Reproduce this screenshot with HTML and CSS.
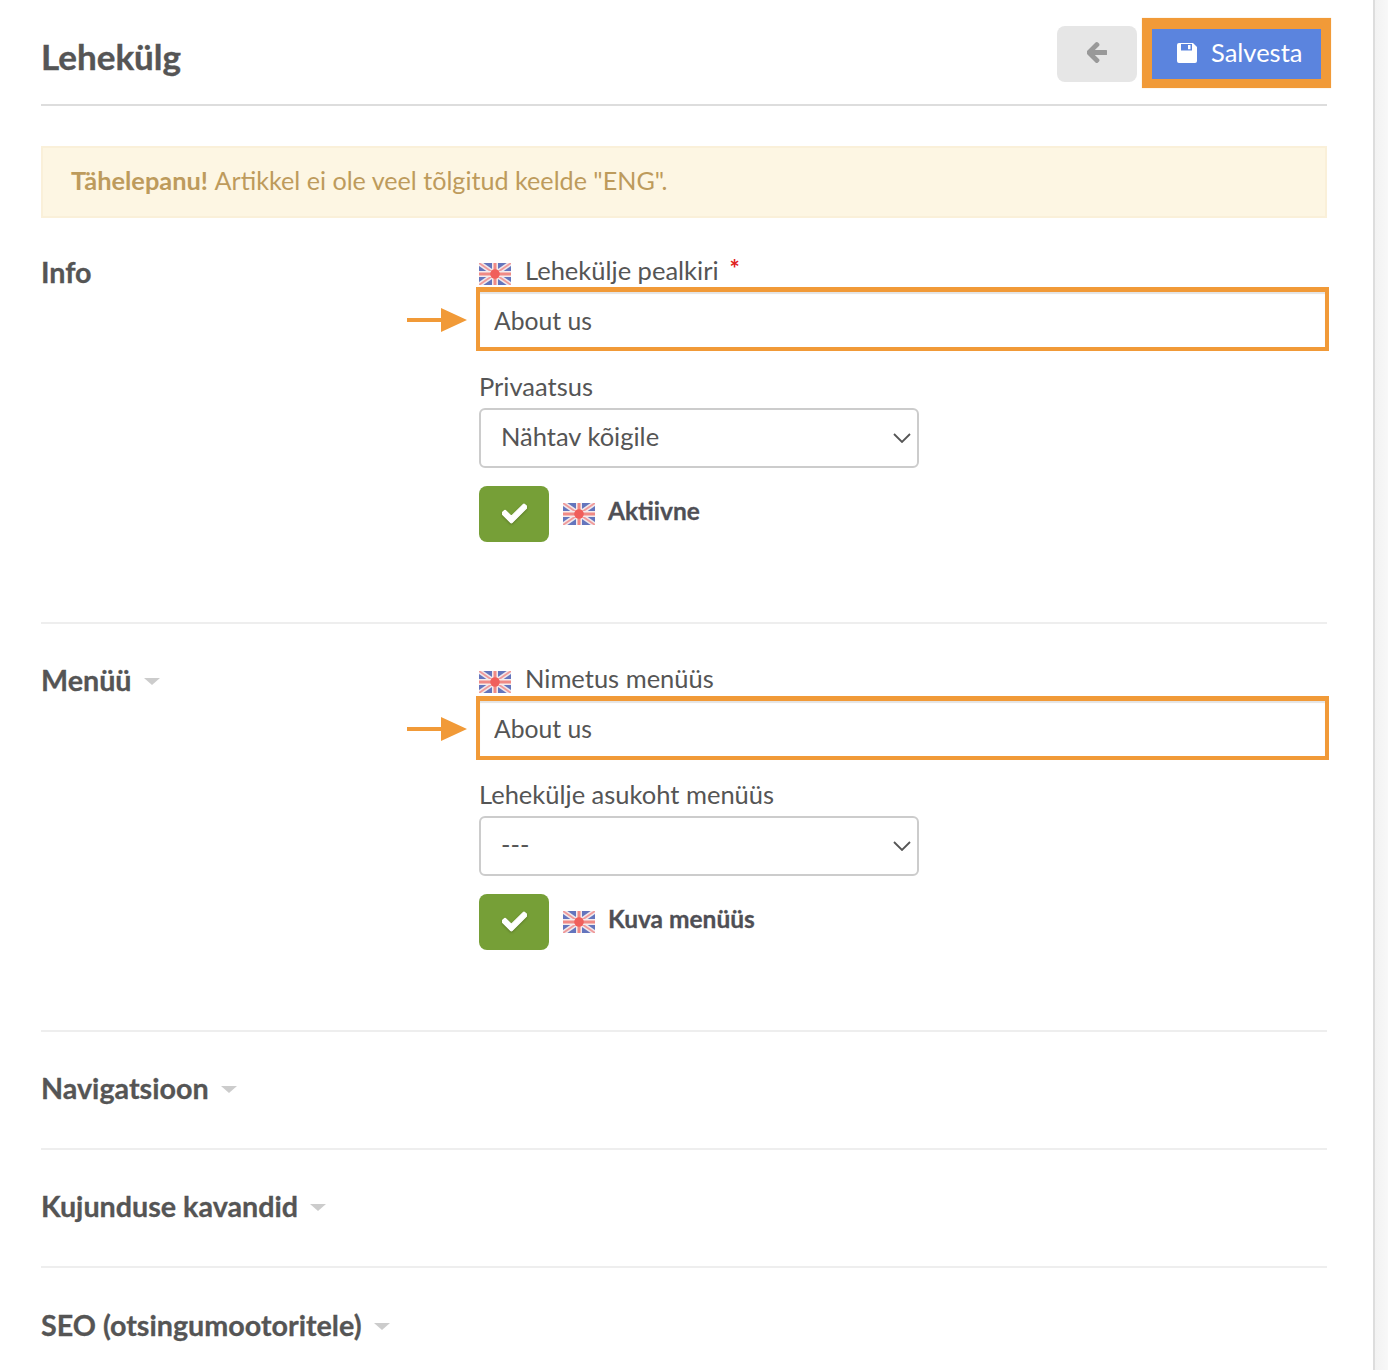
FILE: index.html
```html
<!DOCTYPE html>
<html lang="et">
<head>
<meta charset="utf-8">
<title>Lehekülg</title>
<link rel="stylesheet" href="styles.css">
</head>
<body>
<svg class="defs" width="0" height="0" aria-hidden="true">
  <defs>
    <filter id="soft" x="-5%" y="-5%" width="110%" height="110%"><feGaussianBlur stdDeviation="0.75"/></filter>
    <symbol id="flag" viewBox="0 0 32 22">
      <rect width="32" height="22" fill="#4f63b4"/>
      <g filter="url(#soft)">
        <path d="M0 0L32 22M32 0L0 22" stroke="#efe6ea" stroke-width="5"/>
        <path d="M0 0L32 22M32 0L0 22" stroke="#ee8d8d" stroke-width="1.800"/>
        <path d="M16 0V22M0 11H32" stroke="#f4e9ea" stroke-width="6"/>
        <path d="M16 0V22M0 11H32" stroke="#ef7a74" stroke-width="3"/>
        <circle cx="16" cy="11" r="4.800" fill="#ee4a44"/>
      </g>
    </symbol>
    <symbol id="check" viewBox="0 0 512 512">
      <path d="M173.898 439.404l-166.4-166.4c-9.997-9.997-9.997-26.206 0-36.204l36.203-36.204c9.997-9.998 26.207-9.998 36.204 0L192 312.69 432.095 72.596c9.997-9.997 26.207-9.997 36.204 0l36.203 36.204c9.997 9.997 9.997 26.206 0 36.204l-294.4 294.401c-9.998 9.997-26.207 9.997-36.204-.001z"/>
    </symbol>
    <symbol id="chev" viewBox="0 0 18 10">
      <path d="M1 1l8 8 8-8" fill="none" stroke="#555" stroke-width="1.8"/>
    </symbol>
    <symbol id="pointer" viewBox="0 0 60 26">
      <path d="M0 11h35v4H0z M34 1l26 12-26 12z" fill="#f19a38"/>
    </symbol>
  </defs>
</svg>

<div class="shell">
  <main class="page">
    <header class="top">
      <h1 class="page-title">Lehekülg</h1>
      <div class="actions">
        <button class="btn-back" type="button" aria-label="Tagasi">
          <svg class="ico-back" viewBox="0 0 448 512"><path d="M257.5 445.1l-22.2 22.2c-9.4 9.4-24.6 9.4-33.9 0L7 273c-9.4-9.4-9.4-24.6 0-33.9L201.4 44.7c9.4-9.4 24.6-9.4 33.9 0l22.2 22.2c9.5 9.5 9.3 25-.4 34.3L136.6 216H424c13.3 0 24 10.7 24 24v32c0 13.3-10.7 24-24 24H136.6l120.5 114.8c9.8 9.3 10 24.8.4 34.3z"/></svg>
        </button>
        <div class="save-mark">
          <button class="btn-save" type="button">
            <svg class="ico-save" viewBox="0 0 20 20"><path fill-rule="evenodd" d="M2 0h14l4 4v14a2 2 0 0 1-2 2H2a2 2 0 0 1-2-2V2a2 2 0 0 1 2-2zM4 1v6.500h11V1zM11 2h2.500v4.200H11z"/></svg>
            <span>Salvesta</span>
          </button>
        </div>
      </div>
    </header>

    <div class="alert"><strong>Tähelepanu!</strong> Artikkel ei ole veel tõlgitud keelde "ENG".</div>

    <section class="section section-first">
      <h2 class="sec-title">Info</h2>
      <div class="fields">
        <label class="flag-label"><svg class="flag"><use href="#flag"/></svg><span>Lehekülje pealkiri</span><span class="req">*</span></label>
        <div class="mark-row">
          <svg class="pointer"><use href="#pointer"/></svg>
          <input class="text-input" type="text" value="About us">
        </div>
        <label class="plain-label">Privaatsus</label>
        <div class="select-wrap">
          <select class="select"><option>Nähtav kõigile</option></select>
          <svg class="chev"><use href="#chev"/></svg>
        </div>
        <div class="toggle-row">
          <span class="toggle"><svg class="check"><use href="#check"/></svg></span>
          <svg class="flag"><use href="#flag"/></svg>
          <b class="toggle-text">Aktiivne</b>
        </div>
      </div>
    </section>

    <section class="section">
      <h2 class="sec-title">Menüü<i class="caret"></i></h2>
      <div class="fields">
        <label class="flag-label"><svg class="flag"><use href="#flag"/></svg><span>Nimetus menüüs</span></label>
        <div class="mark-row">
          <svg class="pointer"><use href="#pointer"/></svg>
          <input class="text-input" type="text" value="About us">
        </div>
        <label class="plain-label">Lehekülje asukoht menüüs</label>
        <div class="select-wrap">
          <select class="select"><option>---</option></select>
          <svg class="chev"><use href="#chev"/></svg>
        </div>
        <div class="toggle-row">
          <span class="toggle"><svg class="check"><use href="#check"/></svg></span>
          <svg class="flag"><use href="#flag"/></svg>
          <b class="toggle-text">Kuva menüüs</b>
        </div>
      </div>
    </section>

    <section class="collapsed"><h2 class="sec-title">Navigatsioon<i class="caret"></i></h2></section>
    <section class="collapsed"><h2 class="sec-title">Kujunduse kavandid<i class="caret"></i></h2></section>
    <section class="collapsed"><h2 class="sec-title">SEO (otsingumootoritele)<i class="caret"></i></h2></section>
  </main>
  <div class="rail"></div>
</div>
</body>
</html>
```
FILE: styles.css
```css
* { box-sizing: border-box; }
html, body { margin: 0; height: 100%; overflow: hidden; background: #fff; }
body { font-family: Lato, "Noto Sans", sans-serif; color: #555; font-size: 25.5px; }
.defs { position: absolute; }
.shell { display: flex; height: 1370px; overflow: hidden; }
.page { width: 1373px; padding: 0 46px 0 41px; flex: none; }
.rail { flex: 1; border-left: 2px solid #ddd; background: linear-gradient(90deg, #f2f2f2, #f8f8f8); }

.top { display: flex; justify-content: space-between; align-items: flex-start; height: 106px; border-bottom: 2px solid #ddd; }
.page-title { margin: 36px 0 0; font-size: 35px; line-height: 40px; font-weight: 700; -webkit-text-stroke: 0.4px #555; }
.actions { display: flex; margin-top: 18px; margin-right: -4px; }
.btn-back { width: 80px; height: 56px; margin: 8px 5px 0 0; border: 0; border-radius: 8px; background: #e6e6e6; display: flex; align-items: center; justify-content: center; padding: 0 0 4px; }
.ico-back { width: 20px; height: 23px; fill: #999; stroke: #999; stroke-width: 30; }
.save-mark { border: 10px solid #f19a38; border-top-width: 11px; border-bottom-width: 9px; width: 189px; height: 70px; box-shadow: 0 0 1px #f9cf9d; }
.btn-save { width: 100%; height: 100%; border: 0; padding: 0 0 0 25px; background: #5b84de; color: #fff; font: inherit; font-size: 25.5px; display: flex; align-items: center; gap: 14px; }
.btn-save span { margin-top: -5px; }
.ico-save { width: 20px; height: 20px; fill: #fff; margin-top: -3px; }

.alert { margin-top: 40px; height: 72px; padding: 0 28px 4px; display: flex; align-items: center; gap: 1px; background: #fdf6e3; border: 2px solid #faf0d9; color: #bd9b5c; font-size: 25.15px; white-space: pre; }
.alert strong { font-size: 25.4px; }

.section { display: flex; padding: 42px 0 80px; border-bottom: 2px solid #eee; }
.section-first { padding-top: 40px; }
.sec-title { margin: 0; width: 438px; flex: none; font-size: 28.7px; line-height: 30px; font-weight: 700; display: flex; align-items: center; -webkit-text-stroke: 0.3px #555; }
.section .sec-title { height: 28px; }
.caret { width: 0; height: 0; margin: 3px 0 0 12px; border: 8px solid transparent; border-top: 7px solid #ccc; border-bottom: 0; }
.fields { flex: 1; min-width: 0; }

.flag { width: 32px; height: 22px; flex: none; filter: blur(0.4px); opacity: 0.88; }
.flag-label { display: flex; align-items: center; height: 29px; line-height: 26px; }
.flag-label span:first-of-type { margin-top: -6px; }
.flag-label .flag { margin: 3px 14px 0 0; }
.req { color: #e02020; font-size: 24px; line-height: 20px; margin: -8px 0 0 11px; font-weight: 700; }

.mark-row { position: relative; margin: 0 -2px 0 -3px; }
.section:not(.section-first) .mark-row { top: 1px; }
.section:not(.section-first) .text-input { padding-top: 0; padding-bottom: 1px; }
.text-input { display: block; width: 100%; height: 64px; padding: 1px 14px 0; border: 4px solid #f19a38; border-top-width: 5px; box-shadow: inset 0 2px 1px #e4e4e4; font: inherit; font-size: 24.7px; color: #555; outline: 0; background: #fff; }
.pointer { position: absolute; left: -69px; top: 20px; width: 60px; height: 26px; }

.plain-label { display: block; margin-top: 23px; height: 26px; line-height: 24px; }
.select-wrap { position: relative; width: 440px; margin-top: 8px; }
.select { display: block; width: 100%; height: 60px; padding: 0 20px 4px; appearance: none; -webkit-appearance: none; border: 2px solid #ccc; border-radius: 6px; background: #fff; font: inherit; color: #555; }
.chev { position: absolute; right: 8px; top: 25px; width: 18px; height: 10px; pointer-events: none; }

.toggle-row { display: flex; align-items: center; margin-top: 18px; height: 56px; }
.toggle { width: 70px; height: 56px; border-radius: 8px; background: #769f37; display: flex; align-items: center; justify-content: center; margin-right: 14px; }
.check { width: 25px; height: 25px; fill: #fff; stroke: #fff; stroke-width: 24; margin-top: -2px; filter: drop-shadow(0 1px 1px rgba(60,80,20,.5)); }
.toggle-text { margin: -8px 0 0 13px; font-size: 24.5px; font-weight: 700; color: #4f4f55; -webkit-text-stroke: 0.3px #4f4f55; }

.collapsed { height: 118px; display: flex; align-items: center; padding-bottom: 4px; border-bottom: 2px solid #eee; }
.collapsed:last-child { border-bottom: 0; }
.collapsed .sec-title { width: auto; }
```
